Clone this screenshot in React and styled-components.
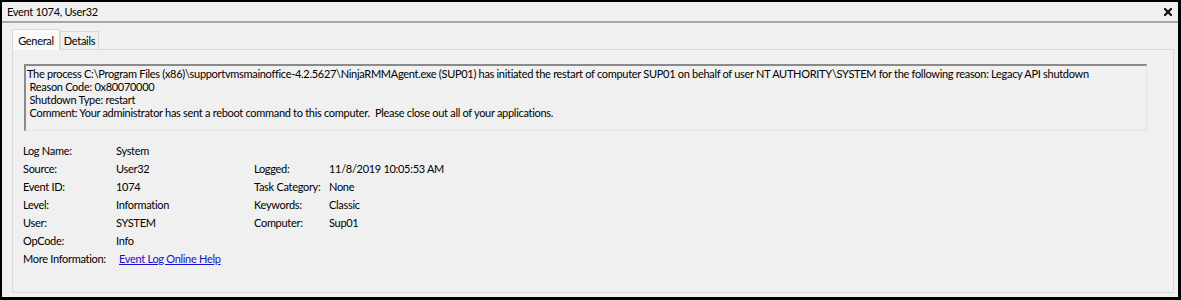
import React from "react";
import styled, { createGlobalStyle } from "styled-components";

const Global = createGlobalStyle`
  html, body { margin: 0; padding: 0; background: #f0f0f0; }
  body { font-family: Lato, "Noto Sans", sans-serif; }
`;

const Window = styled.div`
  box-sizing: border-box;
  width: 1181px;
  height: 300px;
  border: 2px solid #000;
  border-right-width: 3px;
  border-bottom-width: 3px;
  background: #f0f0f0;
  display: flex;
  flex-direction: column;
  font-size: 11px;
  letter-spacing: -0.3px;
  color: #000;
  white-space: nowrap;
`;

const TitleBar = styled.div`
  height: 19px;
  border-bottom: 2px solid #a6a6a6;
  display: flex;
  align-items: center;
  justify-content: space-between;
  padding: 0 6px 0 5px;
`;

const CloseIcon = () => (
  <svg width="8" height="8" viewBox="0 0 8 8">
    <path d="M1 1 L7 7 M7 1 L1 7" stroke="#111" strokeWidth="2.2" strokeLinecap="square" />
  </svg>
);

const Body = styled.div`
  flex: 1;
  display: flex;
  flex-direction: column;
  padding: 5px 4px 4px 10px;
`;

const Tabs = styled.div`
  display: flex;
  align-items: flex-end;
  height: 21px;
`;

const Tab = styled.div`
  box-sizing: border-box;
  height: ${(p) => (p.$active ? "21px" : "18px")};
  width: ${(p) => p.$w}px;
  display: flex;
  align-items: center;
  justify-content: center;
  border: 1px solid #d9d9d9;
  border-bottom: none;
  background: ${(p) => (p.$active ? "#fafafa" : "#f0f0f0")};
  margin-bottom: ${(p) => (p.$active ? "-1px" : "0")};
  position: relative;
  z-index: ${(p) => (p.$active ? 1 : 0)};
`;

const Panel = styled.div`
  flex: 1;
  border: 1px solid #d9d9d9;
  background: #f0f0f0;
  padding: 14px 26px 0 11px;
  display: flex;
  flex-direction: column;
`;

const MessageBox = styled.div`
  box-sizing: border-box;
  height: 67px;
  border-top: 2px solid #8a8a8a;
  border-left: 2px solid #8a8a8a;
  border-right: 1px solid #e3e3e3;
  border-bottom: 1px solid #e3e3e3;
  padding: 1px 1px;
  line-height: 13px;
  white-space: pre;
`;

const Props = styled.div`
  display: grid;
  grid-template-columns: 93px 138px 75px 1fr;
  grid-auto-rows: 18px;
  align-items: center;
  margin-top: 10px;
  margin-left: -1px;
`;

const Cell = styled.span``;

const LinkCell = styled.span`
  grid-column: 2 / 5;
`;

const Link = styled.a`
  color: #1a0dcc;
  text-decoration: underline;
  margin-left: 3px;
`;

const rows = [
  ["Log Name:", "System"],
  ["Source:", "User32", "Logged:", "11/8/2019 10:05:53 AM"],
  ["Event ID:", "1074", "Task Category:", "None"],
  ["Level:", "Information", "Keywords:", "Classic"],
  ["User:", "SYSTEM", "Computer:", "Sup01"],
  ["OpCode:", "Info"],
];

export default function App() {
  return (
    <>
      <Global />
      <Window>
        <TitleBar>
          <span>Event 1074, User32</span>
          <CloseIcon />
        </TitleBar>
        <Body>
          <Tabs>
            <Tab $active $w={48}>General</Tab>
            <Tab $w={39}>Details</Tab>
          </Tabs>
          <Panel>
            <MessageBox>
              {"The process C:\\Program Files (x86)\\supportvmsmainoffice-4.2.5627\\NinjaRMMAgent.exe (SUP01) has initiated the restart of computer SUP01 on behalf of user NT AUTHORITY\\SYSTEM for the following reason: Legacy API shutdown\n Reason Code: 0x80070000\n Shutdown Type: restart\n Comment: Your administrator has sent a reboot command to this computer.  Please close out all of your applications."}
            </MessageBox>
            <Props>
              {rows.map((r, i) => (
                <React.Fragment key={i}>
                  <Cell>{r[0]}</Cell>
                  <Cell>{r[1]}</Cell>
                  <Cell>{r[2] || ""}</Cell>
                  <Cell>{r[3] || ""}</Cell>
                </React.Fragment>
              ))}
              <Cell>More Information:</Cell>
              <LinkCell>
                <Link href="#">Event Log Online Help</Link>
              </LinkCell>
            </Props>
          </Panel>
        </Body>
      </Window>
    </>
  );
}
